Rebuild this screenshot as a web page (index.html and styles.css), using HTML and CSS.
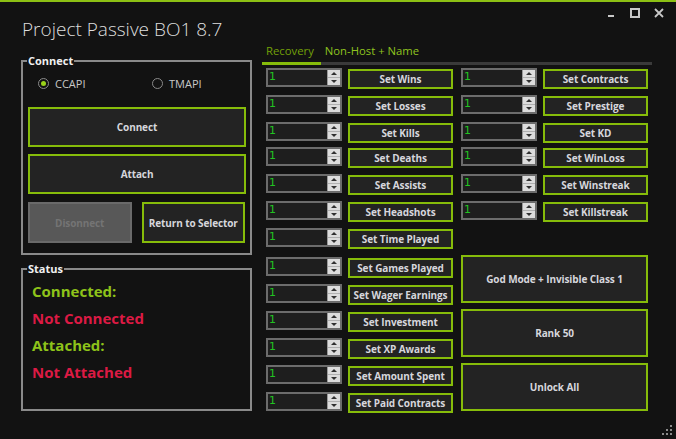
FILE: index.html
```html
<!DOCTYPE html>
<html lang="en">
<head>
<meta charset="utf-8">
<title>Project Passive BO1 8.7</title>
<link rel="stylesheet" href="styles.css">
</head>
<body>
<div class="window">
  <header class="titlebar">
    <h1 class="title">Project Passive BO1 8.7</h1>
    <div class="winctl">
      <span class="winctl-btn"><svg width="10" height="10" viewBox="0 0 10 10"><rect x="2" y="7" width="6" height="2" fill="#c8c8c8"/></svg></span>
      <span class="winctl-btn"><svg width="10" height="10" viewBox="0 0 10 10"><rect x="1" y="1" width="8" height="8" fill="none" stroke="#c8c8c8" stroke-width="2"/></svg></span>
      <span class="winctl-btn"><svg width="10" height="10" viewBox="0 0 10 10"><path d="M1 1 L9 9 M9 1 L1 9" stroke="#c8c8c8" stroke-width="1.8"/></svg></span>
    </div>
  </header>

  <main class="content">
    <aside class="side">
      <fieldset class="group group--connect">
        <legend class="group-title">Connect</legend>
        <div class="radios">
          <label class="radio"><span class="radio-dot radio-dot--on"></span>CCAPI</label>
          <label class="radio"><span class="radio-dot"></span>TMAPI</label>
        </div>
        <button class="btn btn--big">Connect</button>
        <button class="btn btn--big">Attach</button>
        <div class="btn-pair">
          <button class="btn btn--half btn--disabled">Disonnect</button>
          <button class="btn btn--half">Return to Selector</button>
        </div>
      </fieldset>

      <fieldset class="group group--status">
        <legend class="group-title">Status</legend>
        <p class="status status--ok">Connected:</p>
        <p class="status status--bad">Not Connected</p>
        <p class="status status--ok">Attached:</p>
        <p class="status status--bad">Not Attached</p>
      </fieldset>
    </aside>

    <section class="tabs">
      <nav class="tablist">
        <span class="tab tab--active">Recovery</span>
        <span class="tab">Non-Host + Name</span>
      </nav>
      <div class="panel">
        <div class="col">
          <div class="row"><div class="num"><span class="num-val">1</span><span class="spin"><i class="spin-up"></i><i class="spin-down"></i></span></div><button class="btn btn--set">Set Wins</button></div>
          <div class="row"><div class="num"><span class="num-val">1</span><span class="spin"><i class="spin-up"></i><i class="spin-down"></i></span></div><button class="btn btn--set">Set Losses</button></div>
          <div class="row"><div class="num"><span class="num-val">1</span><span class="spin"><i class="spin-up"></i><i class="spin-down"></i></span></div><button class="btn btn--set">Set Kills</button></div>
          <div class="row row--tight"><div class="num"><span class="num-val">1</span><span class="spin"><i class="spin-up"></i><i class="spin-down"></i></span></div><button class="btn btn--set">Set Deaths</button></div>
          <div class="row"><div class="num"><span class="num-val">1</span><span class="spin"><i class="spin-up"></i><i class="spin-down"></i></span></div><button class="btn btn--set">Set Assists</button></div>
          <div class="row"><div class="num"><span class="num-val">1</span><span class="spin"><i class="spin-up"></i><i class="spin-down"></i></span></div><button class="btn btn--set">Set Headshots</button></div>
          <div class="row"><div class="num"><span class="num-val">1</span><span class="spin"><i class="spin-up"></i><i class="spin-down"></i></span></div><button class="btn btn--set">Set Time Played</button></div>
          <div class="row row--loose"><div class="num"><span class="num-val">1</span><span class="spin"><i class="spin-up"></i><i class="spin-down"></i></span></div><button class="btn btn--set">Set Games Played</button></div>
          <div class="row"><div class="num"><span class="num-val">1</span><span class="spin"><i class="spin-up"></i><i class="spin-down"></i></span></div><button class="btn btn--set">Set Wager Earnings</button></div>
          <div class="row"><div class="num"><span class="num-val">1</span><span class="spin"><i class="spin-up"></i><i class="spin-down"></i></span></div><button class="btn btn--set">Set Investment</button></div>
          <div class="row"><div class="num"><span class="num-val">1</span><span class="spin"><i class="spin-up"></i><i class="spin-down"></i></span></div><button class="btn btn--set">Set XP Awards</button></div>
          <div class="row"><div class="num"><span class="num-val">1</span><span class="spin"><i class="spin-up"></i><i class="spin-down"></i></span></div><button class="btn btn--set">Set Amount Spent</button></div>
          <div class="row row--last"><div class="num"><span class="num-val">1</span><span class="spin"><i class="spin-up"></i><i class="spin-down"></i></span></div><button class="btn btn--set">Set Paid Contracts</button></div>
        </div>
        <div class="col">
          <div class="row"><div class="num"><span class="num-val">1</span><span class="spin"><i class="spin-up"></i><i class="spin-down"></i></span></div><button class="btn btn--set">Set Contracts</button></div>
          <div class="row"><div class="num"><span class="num-val">1</span><span class="spin"><i class="spin-up"></i><i class="spin-down"></i></span></div><button class="btn btn--set">Set Prestige</button></div>
          <div class="row"><div class="num"><span class="num-val">1</span><span class="spin"><i class="spin-up"></i><i class="spin-down"></i></span></div><button class="btn btn--set">Set KD</button></div>
          <div class="row row--tight"><div class="num"><span class="num-val">1</span><span class="spin"><i class="spin-up"></i><i class="spin-down"></i></span></div><button class="btn btn--set">Set WinLoss</button></div>
          <div class="row"><div class="num"><span class="num-val">1</span><span class="spin"><i class="spin-up"></i><i class="spin-down"></i></span></div><button class="btn btn--set">Set Winstreak</button></div>
          <div class="row"><div class="num"><span class="num-val">1</span><span class="spin"><i class="spin-up"></i><i class="spin-down"></i></span></div><button class="btn btn--set">Set Killstreak</button></div>
          <div class="big-stack">
            <button class="btn btn--wide">God Mode + Invisible Class 1</button>
            <button class="btn btn--wide">Rank 50</button>
            <button class="btn btn--wide">Unlock All</button>
          </div>
        </div>
      </div>
    </section>
  </main>
  <div class="grip" aria-hidden="true">
    <svg width="10" height="10" viewBox="0 0 10 10" fill="#8a8a8a">
      <rect x="8" y="0" width="2" height="2"/>
      <rect x="4" y="4" width="2" height="2"/><rect x="8" y="4" width="2" height="2"/>
      <rect x="0" y="8" width="2" height="2"/><rect x="4" y="8" width="2" height="2"/><rect x="8" y="8" width="2" height="2"/>
    </svg>
  </div>
</div>
</body>
</html>
```

FILE: styles.css
```css
* { box-sizing: border-box; }

html, body {
  margin: 0;
  padding: 0;
  background: #121212;
}

body {
  font-family: "Open Sans", "Noto Sans", "Liberation Sans", sans-serif;
  color: #d4d4d4;
}

.window {
  position: relative;
  width: 676px;
  height: 439px;
  background: #121212;
  border-top: 2px solid #8cc014;
  overflow: hidden;
}

/* title bar */
.titlebar {
  display: flex;
  justify-content: space-between;
  align-items: flex-start;
  height: 40px;
}

.title {
  margin: 15px 0 0 22px;
  font-size: 19px;
  font-weight: 300;
  line-height: 24px;
  color: #dedede;
  letter-spacing: 0;
}

.winctl {
  display: flex;
  gap: 14px;
  margin: 6px 12px 0 0;
}

.winctl-btn {
  display: flex;
  width: 10px;
  height: 10px;
}

/* main */
.content {
  display: flex;
  gap: 10px;
  padding-left: 21px;
}

.side {
  display: flex;
  flex-direction: column;
  gap: 7px;
  width: 231px;
  padding-top: 12px;
}

.group {
  margin: 0;
  padding: 0 5px 0 5px;
  border: 2px solid #8a8a8a;
  min-width: 0;
}

.group-title {
  margin-left: -1px;
  padding: 0 1px;
  font-size: 11px;
  line-height: 13px;
  font-weight: 700;
  color: #f0f0f0;
}

.group--connect {
  height: 201px;
}

.radios {
  display: flex;
  height: 16px;
  margin: 8px 0 16px 10px;
}

.radio {
  display: flex;
  flex: none;
  align-items: center;
  gap: 6px;
  width: 114px;
  font-size: 11px;
  color: #c8c8c8;
}

.radio-dot {
  position: relative;
  width: 11px;
  height: 11px;
  border: 1px solid #8a8a8a;
  border-radius: 50%;
}

.radio-dot--on::after {
  content: "";
  position: absolute;
  left: 2px;
  top: 2px;
  width: 5px;
  height: 5px;
  border-radius: 50%;
  background: #9ad21a;
}

/* buttons */
.btn {
  display: flex;
  align-items: center;
  justify-content: center;
  margin: 0;
  padding: 0;
  background: #232323;
  border: 2px solid #86bc0a;
  border-radius: 0;
  color: #d6d6dc;
  font-family: "Open Sans", "Noto Sans", "Liberation Sans", sans-serif;
  font-size: 10px;
  font-weight: 700;
  letter-spacing: -0.1px;
  white-space: nowrap;
}

.btn--big {
  width: 218px;
  height: 40px;
  margin-bottom: 7px;
}

.btn--big + .btn--big { margin-bottom: 8px; }

.btn-pair {
  display: flex;
  gap: 10px;
}

.btn--half {
  width: 104px;
  height: 41px;
}

.btn--disabled {
  background: #585858;
  border-color: #6a6a6a;
  color: #747474;
}

.group--status {
  height: 149px;
}

.status {
  margin: 0;
  padding-left: 4px;
  font-size: 15px;
  line-height: 27px;
  font-weight: 700;
}

.status:first-of-type { margin-top: 3px; }

.status--ok { color: #8ec31a; }
.status--bad { color: #dc1a44; }

/* tabs */
.tabs {
  width: 390px;
}

.tablist {
  display: flex;
  height: 23px;
  border-bottom: 3px solid #3a3a3a;
}

.tab {
  padding: 0 5px 0 4px;
  font-size: 11.3px;
  line-height: 17px;
  color: #8fc41f;
}

.tab--active {
  color: #72a008;
  border-bottom: 3px solid #86bc0a;
  margin-bottom: -3px;
  height: 23px;
  padding-right: 7px;
}

.panel {
  display: grid;
  grid-template-columns: 187px 187px;
  column-gap: 8px;
  padding: 4px 0 0 4px;
}

.col {
  display: flex;
  flex-direction: column;
  gap: 7px;
}

.row {
  display: flex;
  gap: 6px;
  height: 20px;
}

.row--tight { margin-top: -2px; }
.row--loose { margin-top: 2px; }

.num {
  display: flex;
  width: 76px;
  height: 19px;
  margin-top: -1px;
  border: 2px solid #6c6c6c;
  background: #1e1e1e;
}

.num-val {
  flex: 1;
  padding-left: 1px;
  font-family: "DejaVu Sans", sans-serif;
  font-size: 11px;
  line-height: 13px;
  color: #22c322;
}

.spin {
  display: flex;
  flex-direction: column;
  width: 13px;
  background: #dcdcdc;
  border-left: 1px solid #9a9a9a;
}

.spin-up, .spin-down {
  flex: 1;
  position: relative;
}

.spin-up { border-bottom: 1px solid #b0b0b0; }

.spin-up::after, .spin-down::after {
  content: "";
  position: absolute;
  left: 3px;
  width: 0;
  height: 0;
  border-left: 3px solid transparent;
  border-right: 3px solid transparent;
}

.spin-up::after {
  top: 2px;
  border-bottom: 3px solid #303030;
}

.spin-down::after {
  top: 2px;
  border-top: 3px solid #303030;
}

.btn--set {
  width: 105px;
  height: 20px;
}

.big-stack {
  display: flex;
  flex-direction: column;
  gap: 6px;
  margin-top: 26px;
}

.btn--wide {
  width: 187px;
  height: 48px;
}

.grip {
  position: absolute;
  right: 4px;
  bottom: 4px;
  width: 10px;
  height: 10px;
  display: flex;
}
```
